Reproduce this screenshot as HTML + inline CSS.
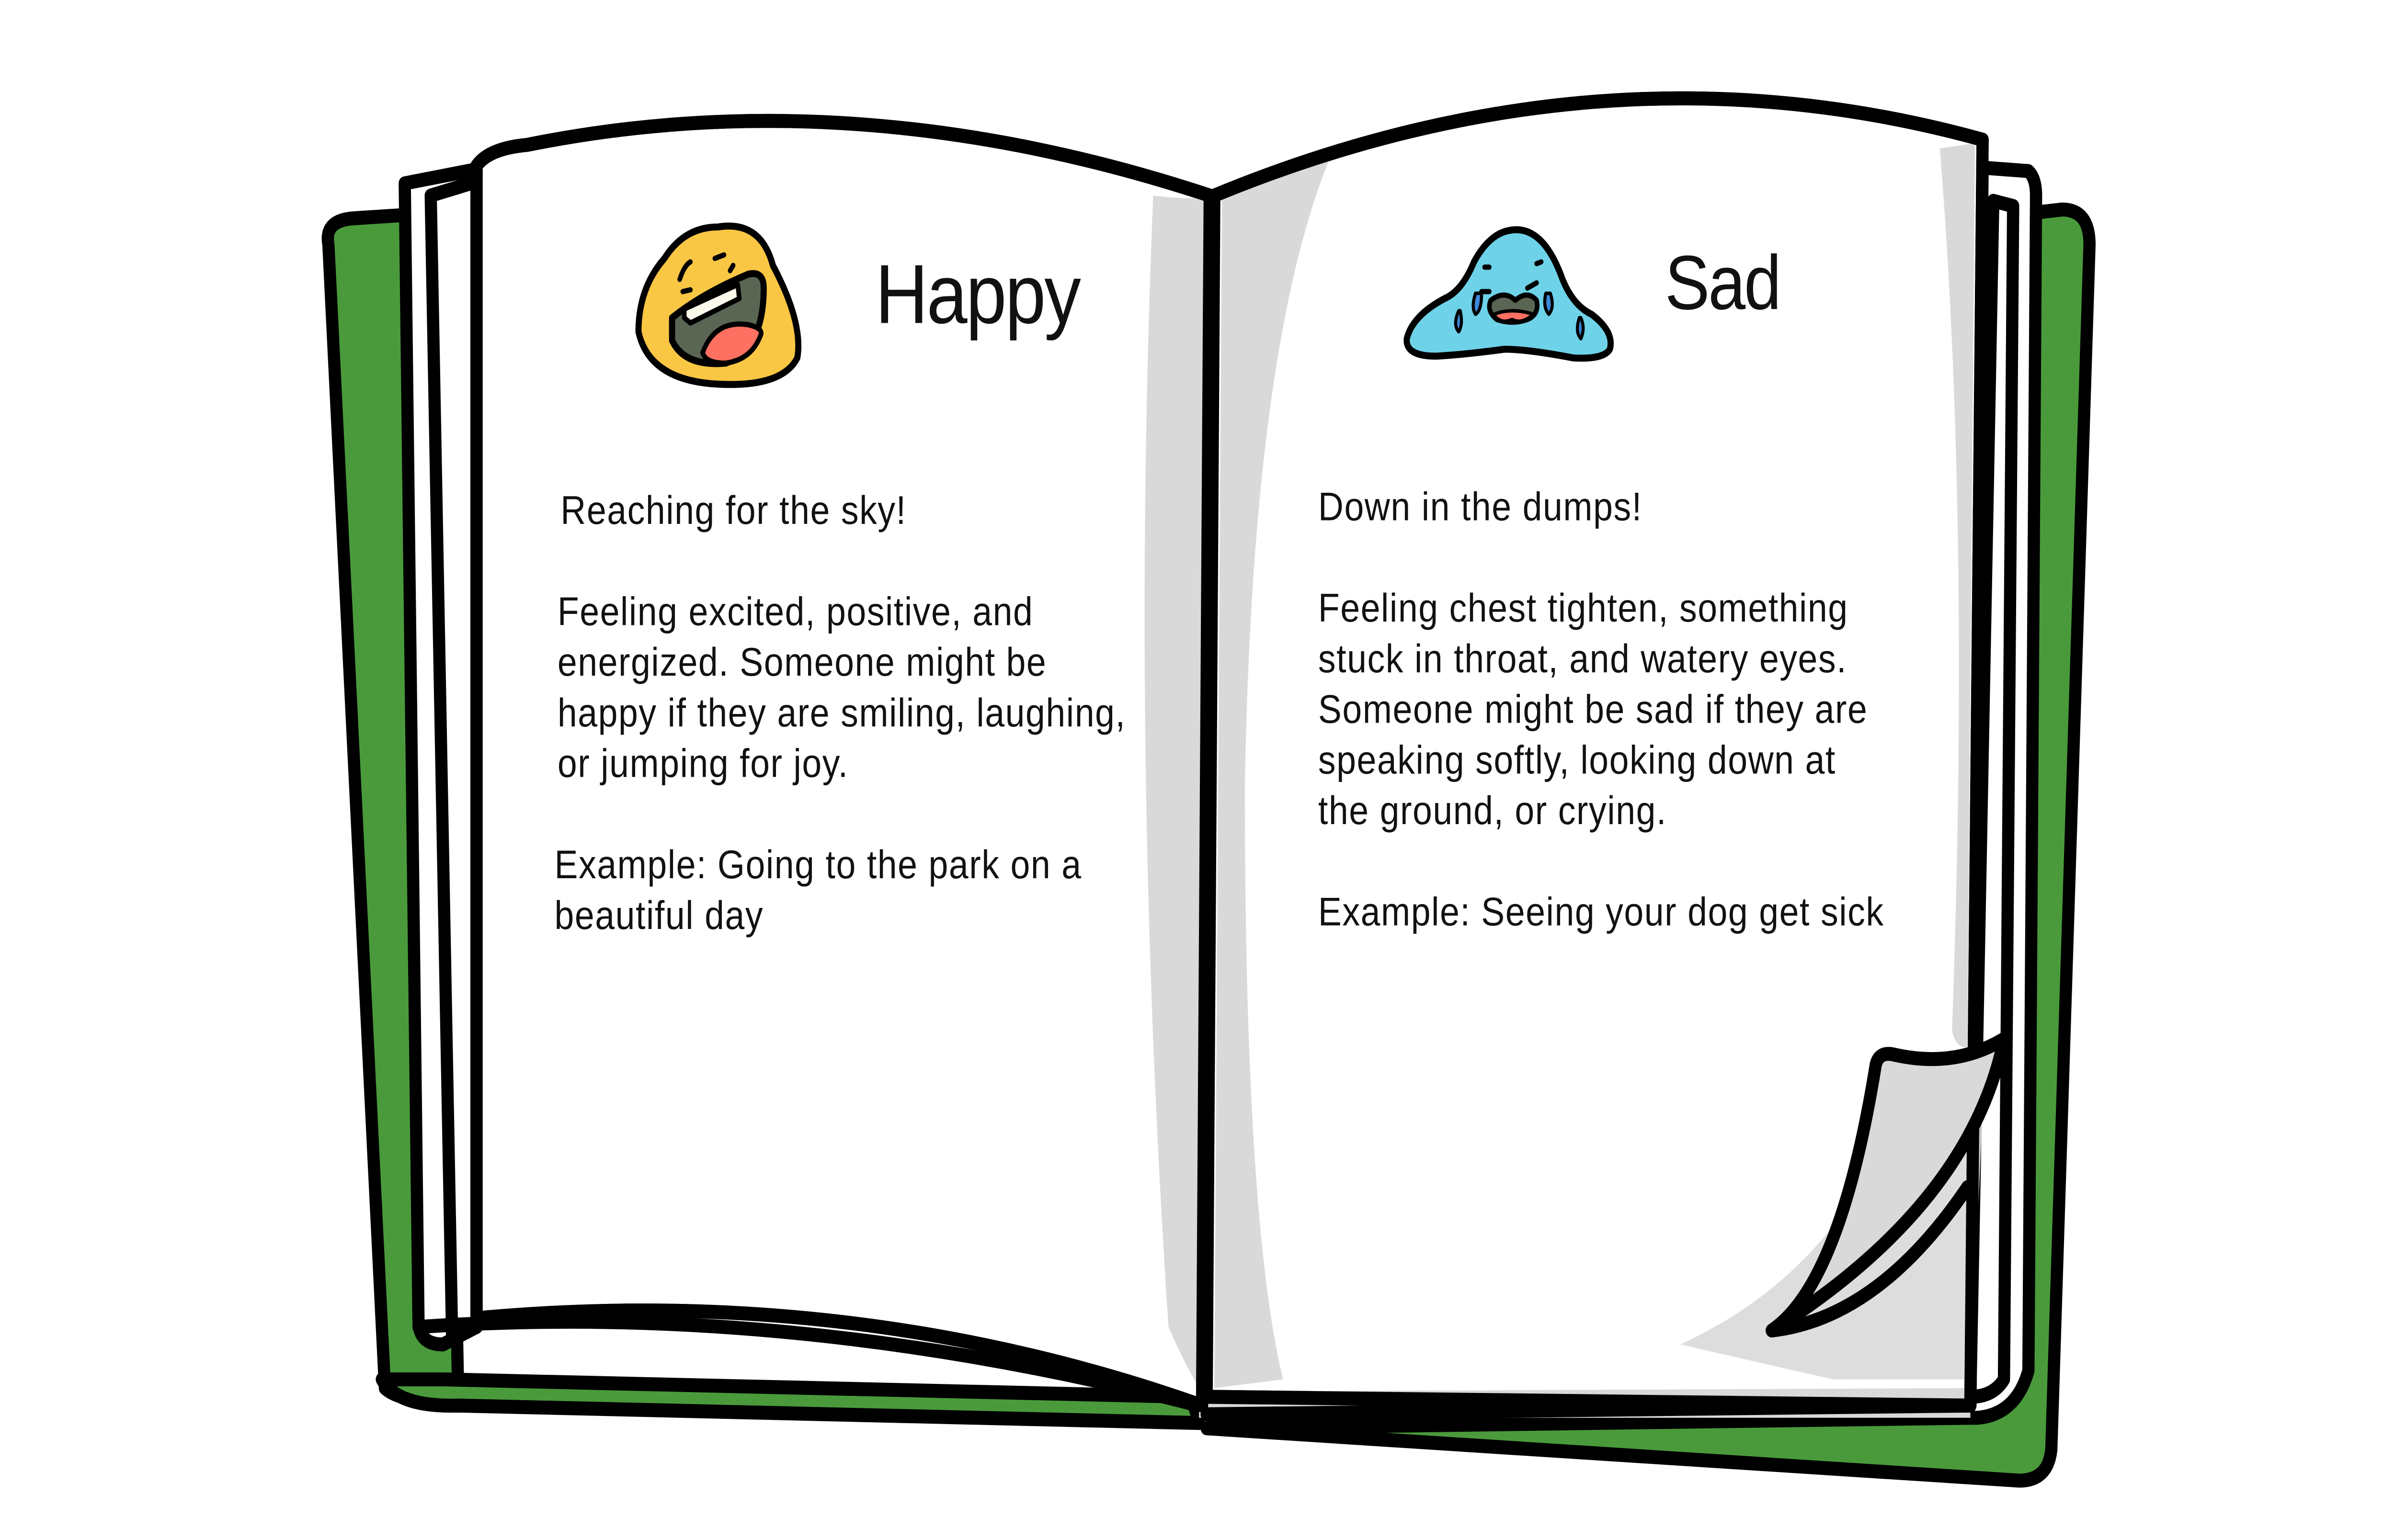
<!DOCTYPE html>
<html><head><meta charset="utf-8"><style>
html,body{margin:0;padding:0;background:#fff;overflow:hidden;width:100%;height:100%;}
svg{display:block;width:100vw;height:100vh;}
text{font-family:"Liberation Sans",sans-serif;fill:#111;}
</style></head><body>
<svg viewBox="0 0 1568 882" preserveAspectRatio="none">
<g stroke="#000" stroke-width="8" stroke-linejoin="round" stroke-linecap="round">
<path d="M215,140 Q212,126 232,125 L285,122 L300,800 Q265,805 252,795 Z" fill="#4a9a3c"/>
<path d="M1300,125 L1350,120 Q1368,120 1368,140 L1343,830 Q1341,848 1322,848 L790,818 L1290,812 Z" fill="#4a9a3c"/>
<path d="M250,790 Q260,806 300,805 L785,815 L780,800 L290,790 Z" fill="#4a9a3c"/>
<path d="M265,105 L312,97 L312,760 L290,770 Q275,770 274,758 Z" fill="#fff"/>
<path d="M282,112 L312,104 L312,760 L296,766 Z" fill="#fff"/>
<path d="M274,760 Q520,745 785,805" fill="none"/>
<path d="M1298,96 L1328,98 Q1333,102 1333,112 L1328,785 Q1320,810 1295,812 L790,810 L1290,805 Z" fill="#fff"/>
<path d="M1305,115 L1318,118 L1312,790 Q1305,800 1290,800 Z" fill="#fff"/>
<path d="M312,95 Q320,85 345,83 Q560,45 792,112 L787,805 Q560,735 312,755 Z" fill="#fff"/>
<path d="M795,112 Q1050,20 1298,80 L1290,805 L790,800 Z" fill="#fff"/>
</g>
<path d="M755,112 Q785,115 788,112 L785,795 Q775,780 765,760 Q740,430 755,112 Z" fill="#d9d9d9"/>
<path d="M800,112 Q840,100 870,92 Q820,200 815,450 Q815,700 840,790 L795,795 Z" fill="#d9d9d9"/>
<path d="M1270,85 L1293,82 L1288,600 Q1280,600 1278,590 Q1290,300 1270,85 Z" fill="#d9d9d9"/>
<path d="M1100,770 Q1200,730 1240,640 L1300,600 L1290,790 L1200,790 Q1150,780 1100,770 Z" fill="#d9d9d9" opacity="0.9"/>
<path d="M1290,795 L785,797 L785,812 L1290,812 Z" fill="#d9d9d9"/>
<g stroke="#000" stroke-width="8" stroke-linejoin="round" stroke-linecap="round" fill="none">
<path d="M312,95 Q320,85 345,83 Q560,45 792,112 L787,805 Q560,735 312,755 Z"/>
<path d="M795,112 Q1050,20 1298,80 L1290,805 L790,800"/>
<path d="M1290,805 L790,810"/>
<path d="M1160,762 Q1205,735 1228,610 Q1230,602 1240,604 Q1280,612 1312,595 Q1290,690 1160,762 Z" fill="#d9d9d9"/>
<path d="M1160,762 Q1230,755 1288,680" />
</g>
<g stroke="#000" stroke-width="4" stroke-linejoin="round">
<path d="M470,130 Q498,126 506,152 Q526,185 522,205 Q512,222 470,220 Q425,218 418,190 Q418,165 435,148 Q448,130 470,130 Z" fill="#fac745"/>
<path d="M440,182 Q460,168 490,157 Q500,155 500,165 Q500,200 475,208 Q448,210 440,195 Z" fill="#5a6653"/>
<path d="M448,182 L448,177 L483,163 L484,171 L452,185 Z" fill="#fbf9ea" stroke-width="3"/>
<path d="M460,202 Q468,183 490,186 Q500,188 498,192 Q492,206 475,208 Q462,208 460,202 Z" fill="#fe7061" stroke-width="3"/>
<path d="M445,160 Q448,152 452,150 M468,148 L474,146 M447,167 L452,166 M478,155 L480,152" fill="none" stroke-width="3" stroke-linecap="round"/>
</g>
<text x="573" y="185" font-size="48" style="letter-spacing:-1px">Happy</text>
<g stroke="#000" stroke-width="4" stroke-linejoin="round">
<path d="M988,132 Q1010,128 1023,160 Q1030,175 1042,180 Q1057,190 1054,200 Q1050,206 1030,205 Q1000,200 985,200 Q960,203 940,204 Q920,204 921,194 Q925,180 948,170 Q958,165 965,150 Q975,134 988,132 Z" fill="#6ed2e8"/>
<path d="M976,172 Q985,166 992,172 Q1000,166 1006,172 Q1008,180 1000,183 Q990,186 980,183 Q973,178 976,172 Z" fill="#5a6653" stroke-width="3"/>
<path d="M978,180 Q990,176 1004,180 Q996,186 990,183 Q982,186 978,180 Z" fill="#fe7061" stroke-width="2"/>
<path d="M966,168 Q963,176 966,180 Q970,178 970,168 Z M1012,168 Q1010,176 1014,180 Q1018,176 1015,168 Z M955,178 Q951,186 955,190 Q958,186 956,178 Z M1034,182 Q1031,190 1035,194 Q1038,188 1035,182 Z" fill="#3e88d8" stroke-width="2"/>
<path d="M972,153 L975,153 M1006,151 L1009,150 M970,167 L975,167 M1000,165 L1006,162" fill="none" stroke-width="3" stroke-linecap="round"/>
</g>
<text x="1090" y="177" font-size="44" style="letter-spacing:-1px">Sad</text>
<g font-size="23" style="letter-spacing:0.5px">
<text x="367" y="300">Reaching for the sky!</text>
<text x="365" y="358">Feeling excited, positive, and</text>
<text x="365" y="387">energized. Someone might be</text>
<text x="365" y="416">happy if they are smiling, laughing,</text>
<text x="365" y="445">or jumping for joy.</text>
<text x="363" y="503">Example: Going to the park on a</text>
<text x="363" y="532">beautiful day</text>
<text x="863" y="298">Down in the dumps!</text>
<text x="863" y="356">Feeling chest tighten, something</text>
<text x="863" y="385">stuck in throat, and watery eyes.</text>
<text x="863" y="414">Someone might be sad if they are</text>
<text x="863" y="443">speaking softly, looking down at</text>
<text x="863" y="472">the ground, or crying.</text>
<text x="863" y="530">Example: Seeing your dog get sick</text>
</g>
</svg>
</body></html>
